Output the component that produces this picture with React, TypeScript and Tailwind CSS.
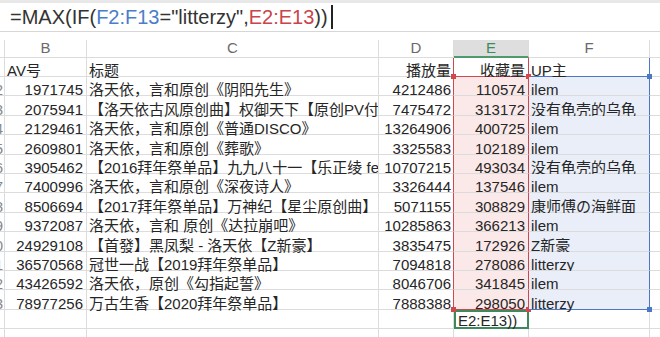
import React from 'react';

type Row = [string, string, string, string, string];

const rows: Row[] = [
  ['1971745', '洛天依，言和原创《阴阳先生》', '4212486', '110574', 'ilem'],
  ['2075941', '【洛天依古风原创曲】权御天下【原创PV付】', '7475472', '313172', '没有龟壳的乌龟'],
  ['2129461', '洛天依，言和原创《普通DISCO》', '13264906', '400725', 'ilem'],
  ['2609801', '洛天依，言和原创《葬歌》', '3325583', '102189', 'ilem'],
  ['3905462', '【2016拜年祭单品】九九八十一【乐正绫 feat. 洛天依】', '10707215', '493034', '没有龟壳的乌龟'],
  ['7400996', '洛天依，言和原创《深夜诗人》', '3326444', '137546', 'ilem'],
  ['8506694', '【2017拜年祭单品】万神纪【星尘原创曲】', '5071155', '308829', '康师傅の海鲜面'],
  ['9372087', '洛天依，言和 原创《达拉崩吧》', '10285863', '366213', 'ilem'],
  ['24929108', '【首發】黑凤梨 - 洛天依【Z新豪】', '3835475', '172926', 'Z新豪'],
  ['36570568', '冠世一战【2019拜年祭单品】', '7094818', '278086', 'litterzy'],
  ['43426592', '洛天依，原创《勾指起誓》', '8046706', '341845', 'ilem'],
  ['78977256', '万古生香【2020拜年祭单品】', '7888388', '298050', 'litterzy'],
];

const cell = 'shrink-0 border-r border-b border-[#dcdcdc] whitespace-nowrap flex items-end leading-[11px]';

function HeaderRow() {
  const h = 'shrink-0 border-r border-b border-[#dcdcdc] flex items-center justify-center text-[#6b6b6b]';
  return (
    <div className="flex h-[18px] text-[15px]">
      <div className={`${h} w-[30px]`} />
      <div className={`${h} w-[82px]`}>B</div>
      <div className={`${h} w-[292px]`}>C</div>
      <div className={`${h} w-[75px]`}>D</div>
      <div className="shrink-0 w-[75px] border-r border-[#dcdcdc] border-b-2 border-b-[#4f9a6c] bg-[#dedede] text-[#3f8a5c] flex items-center justify-center">E</div>
      <div className={`${h} w-[121px]`}>F</div>
      <div className={`${h} w-[60px]`} />
    </div>
  );
}

function TitleRow() {
  return (
    <div className="flex h-[19px]">
      <div className={`${cell} w-[30px]`} />
      <div className={`${cell} w-[82px] pl-[2px]`}>AV号</div>
      <div className={`${cell} w-[292px] pl-[2px]`}>标题</div>
      <div className={`${cell} w-[75px] justify-end pr-[2px] border-r-[#d0484e]`}>播放量</div>
      <div className={`${cell} w-[75px] justify-end pr-[3px] border-b-[#d0484e] border-r-[#d0484e]`}>收藏量</div>
      <div className={`${cell} w-[121px] pl-[2px] border-b-[#4a78c6] border-r-[#4a78c6]`}>UP主</div>
      <div className={`${cell} w-[60px]`} />
    </div>
  );
}

function DataRow({ r, i }: { r: Row; i: number }) {
  const first = i === 0;
  const last = i === rows.length - 1;
  return (
    <div className="flex h-[19.4px]">
      <div className={`${cell} w-[30px] justify-end pr-[1px] text-[#888]`}>{i + 2}</div>
      <div className={`${cell} w-[82px] justify-end pr-[3px]`}>{r[0]}</div>
      <div className={`${cell} w-[292px] pl-[2px] overflow-x-clip`}>{r[1]}</div>
      <div className={`${cell} w-[75px] justify-end pr-[2px] border-r-[#d0484e]`}>{r[2]}</div>
      <div
        className={`${cell} relative w-[75px] justify-end pr-[3px] bg-[#fbe8e8] border-r-[#d0484e] ${last ? 'border-b-[#d0484e]' : ''}`}
      >
        {r[3]}
        {first && (
          <>
            <span className="absolute -left-[3px] -top-[3px] w-[5px] h-[5px] bg-[#d0484e]" />
            <span className="absolute -right-[3px] -top-[3px] w-[5px] h-[5px] bg-[#d0484e]" />
          </>
        )}
        {last && (
          <>
            <span className="absolute -left-[3px] -bottom-[3px] w-[5px] h-[5px] bg-[#d0484e]" />
            <span className="absolute -right-[3px] -bottom-[3px] w-[5px] h-[5px] bg-[#d0484e]" />
          </>
        )}
      </div>
      <div
        className={`${cell} relative w-[121px] pl-[2px] bg-[#e9eef8] border-r-[#4a78c6] ${last ? 'border-b-[#4a78c6]' : ''}`}
      >
        {r[4]}
        {first && <span className="absolute -right-[3px] -top-[3px] w-[5px] h-[5px] bg-[#4a78c6]" />}
        {last && <span className="absolute -right-[3px] -bottom-[3px] w-[5px] h-[5px] bg-[#4a78c6]" />}
      </div>
      <div className={`${cell} w-[60px]`} />
    </div>
  );
}

function EditRow() {
  return (
    <div className="flex h-[19px]">
      <div className={`${cell} w-[30px]`} />
      <div className={`${cell} w-[82px]`} />
      <div className={`${cell} w-[292px]`} />
      <div className={`${cell} w-[75px]`} />
      <div className="shrink-0 w-[75px] border-2 border-[#3f8a5c] flex items-end leading-[11px] pl-[2px] pb-[1px]">E2:E13))</div>
      <div className={`${cell} w-[121px]`} />
      <div className={`${cell} w-[60px]`} />
    </div>
  );
}

function BlankRow() {
  return (
    <div className="flex h-[19px]">
      {['w-[30px]', 'w-[82px]', 'w-[292px]', 'w-[75px]', 'w-[75px]', 'w-[121px]', 'w-[60px]'].map((w, k) => (
        <div key={k} className={`${cell} ${w}`} />
      ))}
    </div>
  );
}

export default function App() {
  return (
    <div className="w-[660px] h-[337px] overflow-hidden bg-white text-[#262626] font-['Liberation_Sans','Noto_Sans_CJK_SC',sans-serif]">
      <div className="h-[3px] bg-[#e8e8e8]" />
      <div className="h-[29px] border-b border-[#d6d6d6] flex items-center pl-[10px] text-[20px] text-[#333]">
        <span>=MAX(IF(</span>
        <span className="text-[#4a7ec8]">F2:F13</span>
        <span>="litterzy",</span>
        <span className="text-[#c9444c]">E2:E13</span>
        <span>))</span>
        <span className="ml-[3px] h-[24px] border-l-2 border-[#222]" />
      </div>
      <div className="h-[8px]" />
      <div className="ml-[-25px] text-[15px]">
        <HeaderRow />
        <TitleRow />
        {rows.map((r, i) => (
          <DataRow key={i} r={r} i={i} />
        ))}
        <EditRow />
        <BlankRow />
      </div>
    </div>
  );
}
